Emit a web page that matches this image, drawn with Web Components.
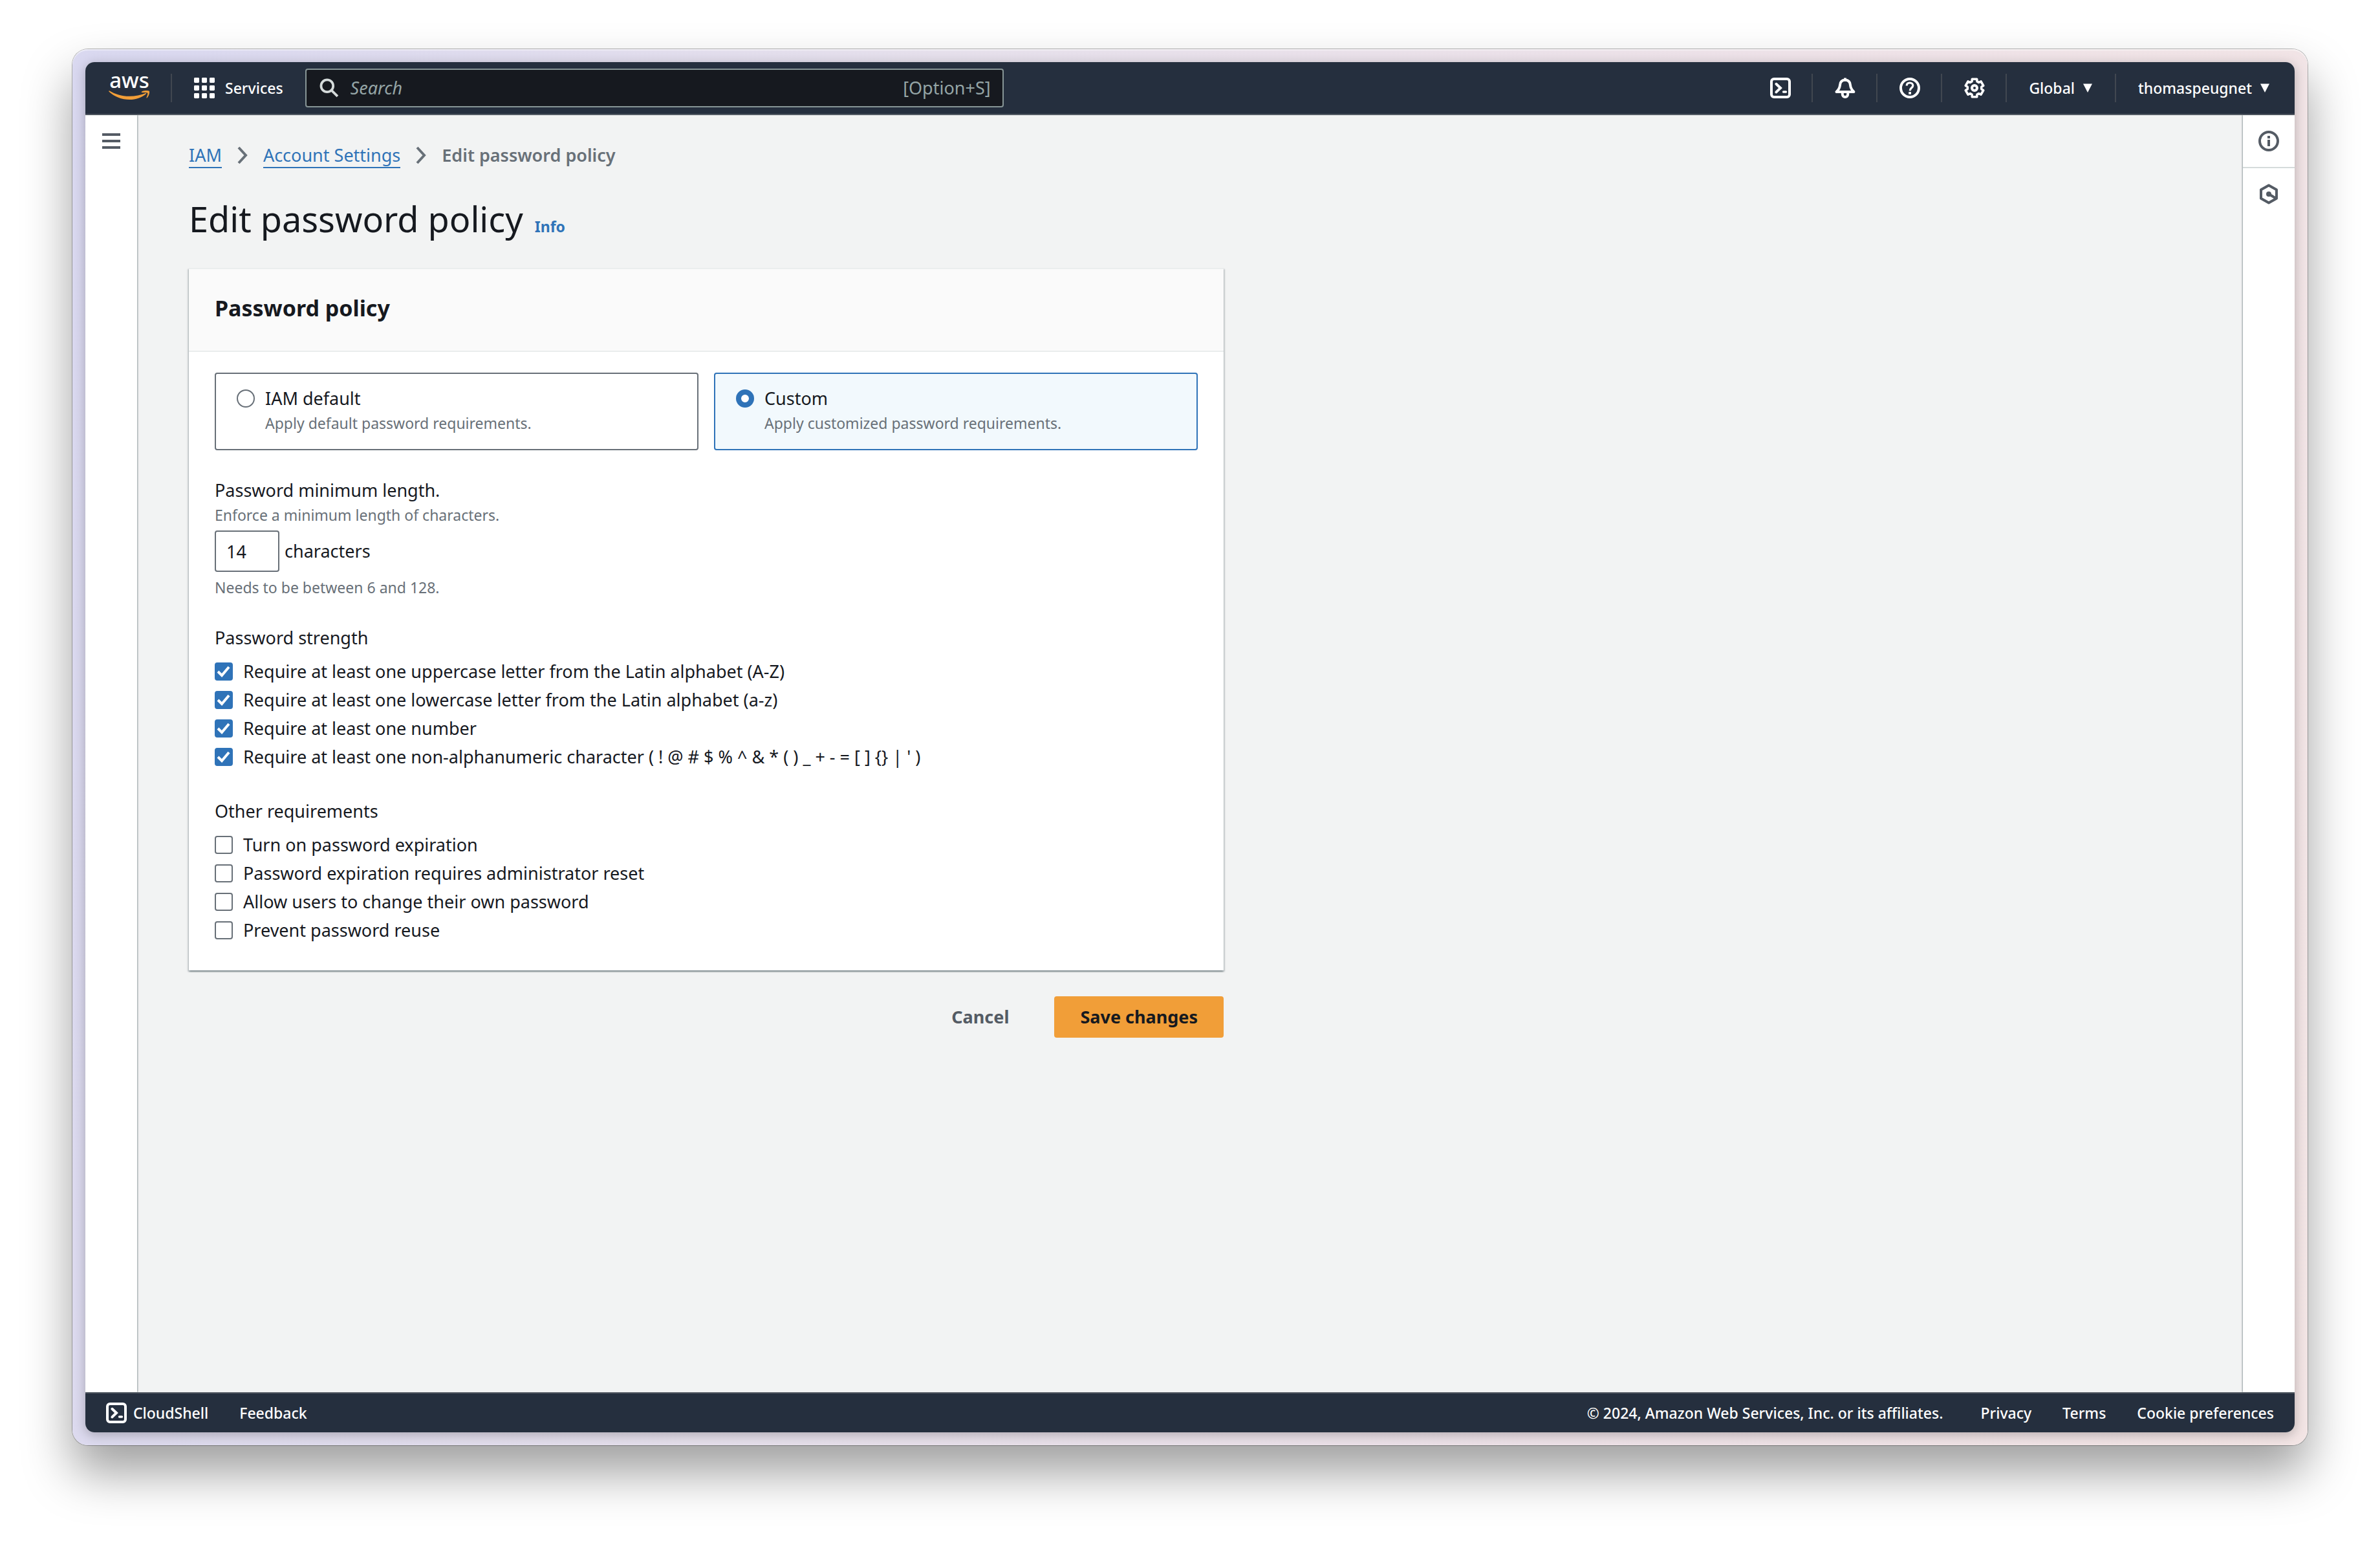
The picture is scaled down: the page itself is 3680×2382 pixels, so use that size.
<!DOCTYPE html>
<html lang="en">
<head>
<meta charset="utf-8">
<title>Edit password policy | IAM</title>
<style>
  html { background: #fff; }
  body {
    margin: 0;
    min-height: 100vh;
    display: flex;
    font: 27px/44px "Noto Sans", "Open Sans", sans-serif;
    color: #16191f;
  }
</style>
</head>
<body>
<iam-window>
  <iam-topbar slot="top"></iam-topbar>
  <iam-menu-rail slot="left"></iam-menu-rail>
  <iam-policy-page></iam-policy-page>
  <iam-help-rail slot="right"></iam-help-rail>
  <iam-footer slot="bottom"></iam-footer>
</iam-window>

<script>
const define = (name, html, setup) => {
  const template = document.createElement('template');
  template.innerHTML = html;
  customElements.define(name, class extends HTMLElement {
    constructor() {
      super();
      this.attachShadow({ mode: 'open' }).append(template.content.cloneNode(true));
    }
    connectedCallback() { if (setup) setup(this, this.shadowRoot); }
  });
};

const reset = `
  * { box-sizing: border-box; }
  button, input { font: inherit; color: inherit; margin: 0; }
  button { background: none; border: 0; padding: 0; cursor: pointer; }
  a { color: inherit; text-decoration: none; }
  svg { display: block; flex: none; }
`;

/* Icon set, drawn on a 16 unit grid */
const icons = {
  terminal: '<rect x="1" y="1" width="14" height="14" rx="2"/><path d="M4.700 4.900 8 8l-3.300 3.200" stroke-linecap="round"/><path d="M10.300 11h1.900" stroke-linecap="round" stroke-width="1.800"/>',
  bell: '<path d="M8 .2v2M1.300 11h13.400c-1.600-1.600-2.500-3-2.700-5.200C11.800 3.200 10.300 1.900 8 1.900S4.200 3.200 4 5.800C3.800 8 2.900 9.400 1.300 11Z" stroke-linejoin="round"/><path d="M5.900 11.500v1.400c0 1.200.9 2.100 2.100 2.100s2.100-.9 2.100-2.100v-1.400"/>',
  help: '<circle cx="8" cy="8" r="7"/><path d="M5.600 6.200C5.600 4.800 6.600 4 8 4s2.400.8 2.400 2.100c0 1.700-2.300 1.900-2.300 4" stroke-width="1.600"/><path d="M7.100 11h1.900v1.900H7.100z" fill="currentColor" stroke="none"/>',
  gear: '<path d="M5.980 2.990 6.160 1.140H9.840L10.020 2.990 11.320 3.740 13.020 2.980 14.860 6.160 13.350 7.250V8.750L14.860 9.840 13.020 13.020 11.320 12.260 10.020 13.010 9.840 14.860H6.160L5.980 13.010 4.680 12.260 2.980 13.020 1.140 9.840 2.650 8.750V7.250L1.140 6.160 2.980 2.980 4.680 3.740Z" stroke-linejoin="round" stroke-width="1.800"/><circle cx="8" cy="8" r="2"/>',
  info: '<circle cx="8" cy="8" r="7"/><path d="M7 4h2v2H7zM7 7h2v5H7z" fill="currentColor" stroke="none"/>',
  hexagon: '<path d="m8 1.200 6 3.400v6.800l-6 3.400-6-3.400V4.600Z" stroke-linejoin="round"/><circle cx="8" cy="8" r="2" fill="currentColor" stroke="none"/><path d="m8.500 8.300 5 2.900"/>',
  search: '<circle cx="6.300" cy="6.300" r="5"/><path d="m9.900 9.900 5 5"/>',
  menu: '<path d="M1 3h14M1 8h14M1 13h14"/>',
  caret: '<path d="M1 1.500h14L8 15Z" fill="currentColor" stroke="none"/>',
  grid: '<g fill="currentColor" stroke="none"><rect width="4" height="4" rx=".7"/><rect x="6" width="4" height="4" rx=".7"/><rect x="12" width="4" height="4" rx=".7"/><rect y="6" width="4" height="4" rx=".7"/><rect x="6" y="6" width="4" height="4" rx=".7"/><rect x="12" y="6" width="4" height="4" rx=".7"/><rect y="12" width="4" height="4" rx=".7"/><rect x="6" y="12" width="4" height="4" rx=".7"/><rect x="12" y="12" width="4" height="4" rx=".7"/></g>',
};
const icon = (name, size = 32) =>
  `<svg width="${size}" height="${size}" viewBox="0 0 16 16" fill="none" stroke="currentColor" stroke-width="2" aria-hidden="true">${icons[name]}</svg>`;

define('iam-window', `
  <style>${reset}
    :host { display: flex; flex: 1; padding: 76px 112px 148px; box-sizing: border-box; }
    .frame {
      flex: 1; display: flex; padding: 20px; border-radius: 24px;
      background: linear-gradient(100deg, #d9d8f0 0%, #e6e0ec 35%, #eee2e8 70%, #f3e5e5 100%);
      box-shadow: 0 0 0 1px rgba(0,0,0,.28), 0 42px 76px rgba(0,0,0,.38), inset 0 2px 1px rgba(255,255,255,.5);
    }
    .screen {
      flex: 1; display: flex; flex-direction: column; overflow: hidden;
      border-radius: 14px; background: #f2f3f3;
    }
    .shade { flex: 1; display: flex; border-radius: 14px; box-shadow: 0 4px 18px rgba(0,0,0,.25); }
    .middle { flex: 1; display: flex; }
    ::slotted(iam-policy-page) { flex: 1; }
  </style>
  <div class="frame"><div class="shade"><div class="screen">
    <slot name="top"></slot>
    <div class="middle"><slot name="left"></slot><slot></slot><slot name="right"></slot></div>
    <slot name="bottom"></slot>
  </div></div></div>`);

define('iam-topbar', `
  <style>${reset}
    :host { display: block; background: #252f3e; color: #fff; border-bottom: 2px solid #545b64; font-size: 23px; font-weight: 500; line-height: 32px; }
    nav { display: flex; align-items: center; height: 80px; }
    .logo { display: flex; flex-direction: column; align-items: center; gap: 4px; padding: 0 32px 6px 36px; font-size: 33px; line-height: 24px; }
    .cell { display: flex; align-items: center; height: 44px; padding: 0 32px 0 34px; border-left: 2px solid #414750; }
    .tools .cell:first-child { border-left: 0; }
    .text { padding-right: 34px; gap: 12px; }
    .text:last-child { padding-right: 38px; }
    .services { gap: 16px; padding-right: 34px; }
    .search {
      flex: 0 1 1080px; height: 60px; display: flex; align-items: center; gap: 18px; padding: 0 18px 0 20px;
      border: 2px solid #879596; border-radius: 4px; background: #16191f; color: #95a5a6;
      font-size: 27px; font-weight: 400;
    }
    .search svg { color: #d5dbdb; }
    .search input { flex: 1; min-width: 0; border: 0; padding: 0; background: none; outline: 0; }
    .search input::placeholder { color: #95a5a6; font-style: italic; opacity: 1; }
    .tools { display: flex; margin-left: auto; }
  </style>
  <nav aria-label="Global">
    <a class="logo" href="#" aria-label="AWS home"><span>aws</span>
      <svg width="64" height="14" viewBox="0 0 64 14" fill="#f19e38"><path d="M1.500.5C10 5.500 20 8.800 32 8.800c9 0 18-1.900 25-4.900.9-.4 1.700.6.8 1.300C51 10.800 42 14 32.500 14 20 14 9 9.300.6 1.700-.2.900.6 0 1.500.5Z"/><path d="M51 1.700C54.500-.6 60.500-.3 62.500.6c1.500.9.1 7.400-3.100 10.700-.6.5-1.200.2-.9-.5.9-2.100 2.300-6 1.700-7.100-.7-1.100-5.700-.8-8.600-.6-1-.1-1.300-.9-.6-1.400Z"/></svg>
    </a>
    <button class="cell services">${icon('grid')}<span>Services</span></button>
    <label class="search">${icon('search', 30)}<input type="search" placeholder="Search" aria-label="Search"><span>[Option+S]</span></label>
    <div class="tools">
      <button class="cell" aria-label="CloudShell">${icon('terminal')}</button>
      <button class="cell" aria-label="Notifications">${icon('bell')}</button>
      <button class="cell" aria-label="Help">${icon('help')}</button>
      <button class="cell" aria-label="Settings">${icon('gear')}</button>
      <button class="cell text"><span>Global</span>${icon('caret', 16)}</button>
      <button class="cell text"><span>thomaspeugnet</span>${icon('caret', 16)}</button>
    </div>
  </nav>`);

const railStyle = `
  :host { display: block; width: 80px; flex: none; position: relative; background: #fff; color: #545b64; }
  button { display: flex; align-items: center; justify-content: center; width: 100%; height: 80px; }
`;
define('iam-menu-rail', `
  <style>${reset}${railStyle}
    :host { box-shadow: 1px 0 2px rgba(0,28,36,.4); }
  </style>
  <button aria-label="Open navigation">${icon('menu')}</button>`);
define('iam-help-rail', `
  <style>${reset}${railStyle}
    :host { box-shadow: -1px 0 2px rgba(0,28,36,.4); }
    button + button { border-top: 2px solid #d5dbdb; height: 82px; }
  </style>
  <button aria-label="Info panel">${icon('info')}</button>
  <button aria-label="Resources">${icon('hexagon')}</button>`);

define('iam-footer', `
  <style>${reset}
    :host { display: block; background: #252f3e; color: #fff; border-top: 2px solid #545b64; font-size: 23px; font-weight: 500; line-height: 32px; }
    footer { display: flex; align-items: center; gap: 48px; height: 60px; padding: 0 32px; }
    button { display: flex; align-items: center; gap: 10px; }
    .legal { margin: 0 10px 0 auto; }
  </style>
  <footer>
    <button>${icon('terminal')}<span>CloudShell</span></button>
    <a href="#">Feedback</a>
    <span class="legal">© 2024, Amazon Web Services, Inc. or its affiliates.</span>
    <a href="#">Privacy</a>
    <a href="#">Terms</a>
    <a href="#">Cookie preferences</a>
  </footer>`);

define('iam-breadcrumbs', `
  <style>${reset}
    :host { display: block; }
    ol { display: flex; align-items: center; gap: 24px; margin: 0; padding: 0; list-style: none; color: #687078; }
    li { display: flex; align-items: center; gap: 24px; }
    a { color: #2f73b8; border-bottom: 2px solid #2f73b8; }
    b { font-weight: 600; }
  </style>
  <nav aria-label="Breadcrumb"><ol>
    <li><span><a href="#">IAM</a></span></li>
    <li><svg width="16" height="28" viewBox="0 0 16 28" fill="none" stroke="currentColor" stroke-width="4" aria-hidden="true"><path d="m2 2 11 12L2 26"/></svg><span><a href="#">Account Settings</a></span></li>
    <li><svg width="16" height="28" viewBox="0 0 16 28" fill="none" stroke="currentColor" stroke-width="4" aria-hidden="true"><path d="m2 2 11 12L2 26"/></svg><b>Edit password policy</b></li>
  </ol></nav>`);

define('iam-card', `
  <style>${reset}
    :host {
      display: block; background: #fff; border-top: 2px solid #eaeded; box-sizing: border-box;
      box-shadow: 0 2px 2px rgba(0,28,36,.3), 2px 2px 2px rgba(0,28,36,.15), -2px 2px 2px rgba(0,28,36,.15);
    }
    header { padding: 38px 40px 44px; background: #fafafa; border-bottom: 2px solid #eaeded; }
    .body { display: flex; flex-direction: column; gap: 40px; padding: 32px 40px 40px; }
  </style>
  <header><slot name="header"></slot></header>
  <div class="body"><slot></slot></div>`);

define('iam-policy-mode', `
  <style>${reset}
    :host { display: grid; grid-template-columns: 1fr 1fr; gap: 24px; }
    label {
      display: grid; grid-template-columns: 28px 1fr; column-gap: 16px; align-items: center;
      padding: 20px 32px; border: 2px solid #687078; border-radius: 4px; line-height: 36px;
    }
    label:has(:checked) { border-color: #2f73b8; background: #f2f9fd; }
    input { appearance: none; width: 28px; height: 28px; border: 2px solid #687078; border-radius: 50%; background: #fff; }
    input:checked { border: 8px solid #2f73b8; }
    small { grid-column: 2; font-size: 23px; line-height: 40px; color: #687078; }
  </style>
  <label><input type="radio" name="mode"><span>IAM default</span><small>Apply default password requirements.</small></label>
  <label><input type="radio" name="mode" checked><span>Custom</span><small>Apply customized password requirements.</small></label>`);

define('iam-min-length', `
  <style>${reset}
    :host { display: block; }
    label { display: block; }
    p { margin: 0; font-size: 23px; line-height: 32px; color: #687078; }
    .row { display: flex; align-items: center; gap: 8px; margin: 8px 0; }
    input { width: 100px; height: 64px; padding: 0 16px; border: 2px solid #687078; border-radius: 4px; background: #fff; }
  </style>
  <label for="length">Password minimum length.</label>
  <p>Enforce a minimum length of characters.</p>
  <div class="row"><input id="length" type="text" inputmode="numeric" value="14"><span>characters</span></div>
  <p>Needs to be between 6 and 128.</p>`);

define('iam-check-group', `
  <style>${reset}
    :host { display: block; }
    fieldset { margin: 0; padding: 0; border: 0; }
    legend { padding: 0 0 8px; }
  </style>
  <fieldset><legend></legend><slot></slot></fieldset>`,
  (host, root) => { root.querySelector('legend').textContent = host.getAttribute('legend'); });

define('iam-checkbox', `
  <style>${reset}
    :host { display: block; }
    label { display: flex; align-items: center; gap: 16px; }
    .box { display: grid; flex: none; }
    .box > * { grid-area: 1 / 1; }
    input { appearance: none; width: 28px; height: 28px; border: 2px solid #687078; border-radius: 4px; background: #fff; }
    input:checked { border-color: #2f73b8; background: #2f73b8; }
    svg { visibility: hidden; pointer-events: none; }
    input:checked + svg { visibility: visible; }
  </style>
  <label><span class="box"><input type="checkbox"><svg width="28" height="28" viewBox="0 0 28 28" fill="none" stroke="#fff" stroke-width="4" aria-hidden="true"><path d="m5 14 6 6L22 7"/></svg></span><span><slot></slot></span></label>`,
  (host, root) => { root.querySelector('input').checked = host.hasAttribute('checked'); });

define('iam-policy-page', `
  <style>${reset}
    :host { display: block; background: #f2f3f3; }
    main { max-width: 1760px; padding: 40px 80px; }
    .title { display: flex; align-items: baseline; gap: 18px; margin: 40px 0; }
    h1 { margin: 0; font-size: 54px; font-weight: 400; line-height: 72px; }
    .title a { color: #2f73b8; font-size: 23px; font-weight: 700; }
    h2 { margin: 0; font-size: 34px; font-weight: 700; line-height: 44px; }
    .actions { display: flex; justify-content: flex-end; gap: 30px; margin-top: 40px; }
    .actions button { height: 64px; padding: 0 40px; border-radius: 4px; font-weight: 700; color: #545b64; }
    .actions .primary { background: #f19e38; color: #16191f; }
  </style>
  <main>
    <iam-breadcrumbs></iam-breadcrumbs>
    <div class="title"><h1>Edit password policy</h1><a href="#">Info</a></div>
    <iam-card>
      <h2 slot="header">Password policy</h2>
      <iam-policy-mode></iam-policy-mode>
      <iam-min-length></iam-min-length>
      <iam-check-group legend="Password strength">
        <iam-checkbox checked>Require at least one uppercase letter from the Latin alphabet (A-Z)</iam-checkbox>
        <iam-checkbox checked>Require at least one lowercase letter from the Latin alphabet (a-z)</iam-checkbox>
        <iam-checkbox checked>Require at least one number</iam-checkbox>
        <iam-checkbox checked>Require at least one non-alphanumeric character ( ! @ # $ % ^ &amp; * ( ) _ + - = [ ] {} | ' )</iam-checkbox>
      </iam-check-group>
      <iam-check-group legend="Other requirements">
        <iam-checkbox>Turn on password expiration</iam-checkbox>
        <iam-checkbox>Password expiration requires administrator reset</iam-checkbox>
        <iam-checkbox>Allow users to change their own password</iam-checkbox>
        <iam-checkbox>Prevent password reuse</iam-checkbox>
      </iam-check-group>
    </iam-card>
    <div class="actions"><button type="button">Cancel</button><button type="submit" class="primary">Save changes</button></div>
  </main>`);
</script>
</body>
</html>
